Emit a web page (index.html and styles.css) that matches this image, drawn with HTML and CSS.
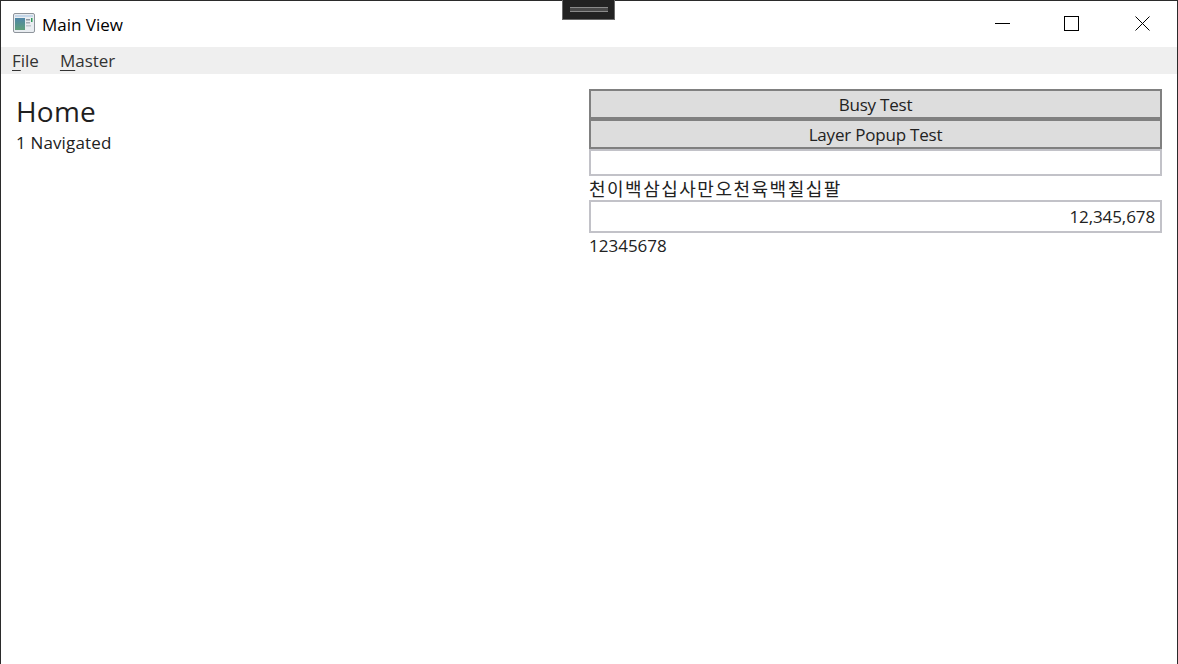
FILE: index.html
```html
<!DOCTYPE html>
<html lang="en">
<head>
<meta charset="utf-8">
<title>Main View</title>
<link rel="stylesheet" href="styles.css">
</head>
<body>
<div class="window">
  <header class="titlebar">
    <svg class="app-icon" width="22" height="20" viewBox="0 0 22 20">
      <defs>
        <linearGradient id="pane" x1="0" y1="0" x2="0" y2="1">
          <stop offset="0" stop-color="#4f86a8"/>
          <stop offset="1" stop-color="#5fa07a"/>
        </linearGradient>
      </defs>
      <rect x="0.5" y="0.5" width="21" height="19" rx="1.5" fill="#e9edf1" stroke="#8f959c"/>
      <rect x="2" y="2" width="18" height="2" fill="#c4d6e8"/>
      <rect x="2" y="5" width="10" height="12" fill="url(#pane)"/>
      <rect x="13" y="6" width="4" height="1.5" fill="#8d96a0"/>
      <rect x="13" y="9" width="4" height="1.5" fill="#a6aeb6"/>
      <rect x="13" y="12" width="5" height="1.5" fill="#c0c6cc"/>
      <rect x="18" y="5" width="1.5" height="4" fill="#2f9a58"/>
    </svg>
    <span class="title">Main View</span>
    <div class="controls">
      <span class="control control-min">
        <svg width="15" height="15" viewBox="0 0 15 15"><path d="M0 7.5H15" stroke="#000" fill="none"/></svg>
      </span>
      <span class="control control-max">
        <svg width="15" height="15" viewBox="0 0 15 15"><rect x="0.5" y="0.5" width="14" height="14" stroke="#000" fill="none"/></svg>
      </span>
      <span class="control">
        <svg width="15" height="15" viewBox="0 0 15 15"><path d="M0.5 0.5L14.5 14.5M14.5 0.5L0.5 14.5" stroke="#000" fill="none"/></svg>
      </span>
    </div>
  </header>
  <nav class="menu">
    <span class="menu-item"><u>F</u>ile</span>
    <span class="menu-item"><u>M</u>aster</span>
  </nav>
  <main class="content">
    <section class="left">
      <h1 class="heading">Home</h1>
      <p class="text navigated">1 Navigated</p>
    </section>
    <section class="right">
      <button class="btn">Busy Test</button>
      <button class="btn">Layer Popup Test</button>
      <div class="field field-a"></div>
      <div class="text hangul">천이백삼십사만오천육백칠십팔</div>
      <div class="field field-b">12,345,678</div>
      <div class="text digits">12345678</div>
    </section>
  </main>
</div>
<div class="grip"><span class="grip-bar"></span></div>
</body>
</html>
```

FILE: styles.css
```css
* { box-sizing: border-box; }
html, body { margin: 0; height: 100%; background: #fff; overflow: hidden; }
body { font-family: "Open Sans", "Noto Sans CJK KR", sans-serif; color: #1f1f1f; }

.window {
  height: 664px;
  border: 1px solid #2b2b2b;
  border-bottom: 0;
  display: flex;
  flex-direction: column;
}

.titlebar {
  height: 46px;
  flex: none;
  display: flex;
  align-items: center;
  padding-left: 12px;
  background: #fff;
}
.app-icon { flex: none; margin-top: -3px; }
.title { margin-left: 7px; font-size: 17px; color: #000; }
.controls { margin-left: auto; display: flex; align-self: flex-start; }
.control {
  width: 70px;
  height: 45px;
  display: flex;
  align-items: center;
  justify-content: center;
}
.control-min { width: 67px; }
.control-max { width: 71px; }

.menu {
  height: 27px;
  flex: none;
  background: #efefef;
  display: flex;
  align-items: center;
  padding-left: 11px;
  gap: 21px;
  font-size: 17px;
  color: #333;
}
.menu-item u { text-underline-offset: 3px; }

.content {
  flex: 1;
  display: grid;
  grid-template-columns: 573px 573px;
  padding: 15px 16px 0 15px;
}
.heading { margin: 3px 0 0; font-size: 28px; font-weight: 400; line-height: 38px; letter-spacing: 0.2px; color: #1f1f1f; }
.text { margin: 0; font-size: 17px; line-height: 22px; color: #222; }
.navigated { margin-top: 2px; letter-spacing: 0.15px; }

.right { display: flex; flex-direction: column; }
.btn {
  height: 30px;
  padding: 0;
  border: 2px solid #808080;
  background: #dddddd;
  font: inherit;
  font-size: 17px;
  line-height: 28px;
  letter-spacing: -0.2px;
  color: #222;
}
.field {
  border: 2px solid #c2c2c8;
  background: #fff;
  font-size: 17px;
  letter-spacing: -0.1px;
  text-align: right;
  color: #222;
}
.field-a { height: 27px; }
.field-b { height: 33px; padding: 3px 5px 0 0; line-height: 24px; }
.hangul { height: 24px; padding-top: 2px; font-size: 18px; letter-spacing: 1.5px; white-space: nowrap; }
.digits { padding-top: 2px; }

.grip {
  position: absolute;
  left: 562px;
  top: 0;
  width: 53px;
  height: 20px;
  background: #222;
  border: 1px solid #6a6a6a;
  border-top: 0;
  display: flex;
  align-items: center;
  justify-content: center;
}
.grip-bar {
  width: 38px;
  height: 5px;
  border-top: 1px solid #8a8a8a;
  border-bottom: 1px solid #8a8a8a;
  background: #4a4a4a;
}
```
